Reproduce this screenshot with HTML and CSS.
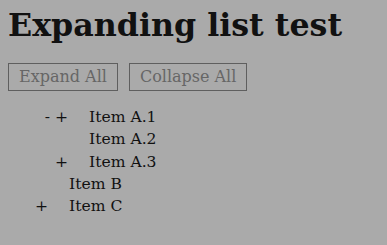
FILE: index.html
```
<!DOCTYPE html>
<html lang="en">
<head>
    <meta charset="UTF-8">
    <meta name="viewport" content="width=device-width, initial-scale=1.0">
    <title>Expanding list test</title>
    <link rel="stylesheet" href="styles.css">
</head>
<body>
    <h1>Expanding list test</h1>
    <div class="controls">
        <button>Expand All</button>
        <button>Collapse All</button>
    </div>
    <ul class="tree">
        <li class="row level2"><span class="toggle">- +</span><span class="label">Item A.1</span></li>
        <li class="row level2"><span class="toggle"></span><span class="label">Item A.2</span></li>
        <li class="row level2"><span class="toggle">+</span><span class="label">Item A.3</span></li>
        <li class="row level1"><span class="toggle"></span><span class="label">Item B</span></li>
        <li class="row level1"><span class="toggle">+</span><span class="label">Item C</span></li>
    </ul>
</body>
</html>
```

FILE: styles.css
```
body {
    margin: 0;
    padding: 6px 8px;
    background: #aaaaaa;
    color: #111;
    font-family: "DejaVu Serif", serif;
    font-size: 16px;
}
h1 {
    margin: 0;
    font-size: 31.7px;
    line-height: 37px;
}
.controls {
    display: flex;
    gap: 11px;
    margin-top: 20px;
}
button {
    font-family: "DejaVu Serif", serif;
    font-size: 16px;
    line-height: 18px;
    padding: 4px 10px;
    background: transparent;
    color: #666;
    border: 1px solid #5f5f5f;
    border-radius: 0;
}
.tree {
    list-style: none;
    margin: 15px 0 0 -8px;
    padding: 0;
    font-size: 15.6px;
}
.row {
    display: flex;
    line-height: 22.25px;
}
.level1 { padding-left: 34px; }
.level2 { padding-left: 54px; }
.toggle {
    display: flex;
    justify-content: flex-end;
    box-sizing: border-box;
    width: 35px;
    padding-right: 21px;
    white-space: pre;
}
```
